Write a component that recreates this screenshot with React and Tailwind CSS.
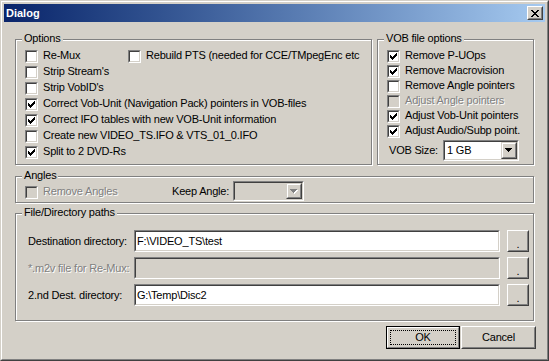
import React from 'react';

const disabledText = "text-[#808080] [text-shadow:1px_1px_0_#fff]";

const CheckMark = () => (
    <svg width="7" height="7" viewBox="0 0 7 7" shapeRendering="crispEdges">
        {[2, 3, 4, 3, 2, 1, 0].map((y, x) => (
            <rect key={x} x={x} y={y} width="1" height="3" fill="#000" />
        ))}
    </svg>
);

const Arrow = ({ disabled }) => (
    <svg width="8" height="5" viewBox="0 0 8 5" shapeRendering="crispEdges">
        {disabled && [0, 1, 2, 3].map((i) => (
            <rect key={'s' + i} x={i + 1} y={i + 1} width={7 - i * 2} height="1" fill="#fff" />
        ))}
        {[0, 1, 2, 3].map((i) => (
            <rect key={i} x={i} y={i} width={7 - i * 2} height="1" fill={disabled ? '#808080' : '#000'} />
        ))}
    </svg>
);

const CloseGlyph = () => (
    <svg width="8" height="7" viewBox="0 0 8 7" shapeRendering="crispEdges">
        <rect x="0" y="0" width="2" height="1" />
        <rect x="6" y="0" width="2" height="1" />
        <rect x="1" y="1" width="2" height="1" />
        <rect x="5" y="1" width="2" height="1" />
        <rect x="2" y="2" width="4" height="1" />
        <rect x="3" y="3" width="2" height="1" />
        <rect x="2" y="4" width="4" height="1" />
        <rect x="1" y="5" width="2" height="1" />
        <rect x="5" y="5" width="2" height="1" />
        <rect x="0" y="6" width="2" height="1" />
        <rect x="6" y="6" width="2" height="1" />
    </svg>
);

const CheckBox = ({ checked, disabled }) => (
    <span className="flex w-[13px] h-[13px] shrink-0 border border-t-[#808080] border-l-[#808080] border-r-white border-b-white">
        <span className={`flex flex-1 items-center justify-center border border-t-[#404040] border-l-[#404040] border-r-[#d4d0c8] border-b-[#d4d0c8] ${disabled ? 'bg-[#d4d0c8]' : 'bg-white'}`}>
            {checked && <CheckMark />}
        </span>
    </span>
);

const Option = ({ label, checked, disabled, className = 'h-[16px]' }) => (
    <div className={`flex items-start ${className}`}>
        <CheckBox checked={checked} disabled={disabled} />
        <span className={`ml-[5px] -mt-[1px] whitespace-nowrap ${disabled ? disabledText : ''}`}>{label}</span>
    </div>
);

const Sunken = ({ className = '', disabled, children }) => (
    <div className={`flex border border-t-[#808080] border-l-[#808080] border-r-white border-b-white ${className}`}>
        <div className={`flex flex-1 items-center min-w-0 border border-t-[#404040] border-l-[#404040] border-r-[#d4d0c8] border-b-[#d4d0c8] ${disabled ? 'bg-[#d4d0c8]' : 'bg-white'}`}>
            {children}
        </div>
    </div>
);

const DropButton = ({ disabled }) => (
    <div className="flex w-[16px] h-full shrink-0 border border-t-[#d4d0c8] border-l-[#d4d0c8] border-r-[#404040] border-b-[#404040]">
        <div className="flex flex-1 items-center justify-center bg-[#d4d0c8] border border-t-white border-l-white border-r-[#808080] border-b-[#808080]">
            <Arrow disabled={disabled} />
        </div>
    </div>
);

const Combo = ({ value, disabled, className }) => (
    <Sunken className={className} disabled={disabled}>
        <span className="flex-1 pl-[2px]">{value}</span>
        <DropButton disabled={disabled} />
    </Sunken>
);

const PushButton = ({ children, className = '' }) => (
    <button className={`flex border border-t-white border-l-white border-r-[#404040] border-b-[#404040] ${className}`}>
        <span className="flex flex-1 items-center justify-center bg-[#d4d0c8] border border-t-[#d4d0c8] border-l-[#d4d0c8] border-r-[#808080] border-b-[#808080]">
            {children}
        </span>
    </button>
);

const Group = ({ title, className = '', children }) => (
    <div className={`relative border border-[#808080] shadow-[inset_1px_1px_0_#fff,1px_1px_0_#fff] ${className}`}>
        <span className="absolute left-[6px] top-[-8px] bg-[#d4d0c8] px-[2px] leading-[13px]">{title}</span>
        {children}
    </div>
);

const PathRow = ({ label, value, disabled }) => (
    <div className="flex items-center h-[22px]">
        <span className={`w-[106px] pl-[12px] whitespace-nowrap box-content ${disabled ? disabledText : ''}`}>{label}</span>
        <Sunken className="w-[366px] h-[22px]" disabled={disabled}>
            <span className="pl-[1px]">{value}</span>
        </Sunken>
        <PushButton className="w-[22px] h-[22px] ml-[7px]">
            <span className="mt-[6px]">.</span>
        </PushButton>
    </div>
);

const App = () => {
    return (
        <div className="w-[549px] h-[361px] bg-[#d4d0c8] border border-t-[#d4d0c8] border-l-[#d4d0c8] border-r-[#404040] border-b-[#404040] font-['Liberation_Sans',Arial,sans-serif] text-[11px] leading-[13px] tracking-[-0.2px] text-black">
            <div className="h-full flex flex-col border border-t-white border-l-white border-r-[#808080] border-b-[#808080] p-[2px]">
                <div className="h-[18px] flex items-center justify-between bg-linear-to-r from-[#0a246a] to-[#a6caf0] pl-[2px] pr-[2px]">
                    <span className="text-white font-bold tracking-normal">Dialog</span>
                    <PushButton className="w-[16px] h-[14px]">
                        <CloseGlyph />
                    </PushButton>
                </div>

                <div className="flex flex-col flex-1 px-[11px] pt-[17px]">
                    <div className="flex gap-[5px] h-[126px]">
                        <Group title="Options" className="w-[357px] pt-[10px] pl-[9px]">
                            <div className="flex">
                                <div className="w-[103px]">
                                    <Option label="Re-Mux" />
                                </div>
                                <Option label="Rebuild PTS (needed for CCE/TMpegEnc etc" />
                            </div>
                            <Option label="Strip Stream's" />
                            <Option label="Strip VobID's" />
                            <Option label="Correct Vob-Unit (Navigation Pack) pointers in VOB-files" checked />
                            <Option label="Correct IFO tables with new VOB-Unit information" checked />
                            <Option label="Create new VIDEO_TS.IFO & VTS_01_0.IFO" />
                            <Option label="Split to 2 DVD-Rs" checked />
                        </Group>

                        <Group title="VOB file options" className="flex-1 pt-[10px] pl-[9px]">
                            <Option label="Remove P-UOps" checked className="h-[15px]" />
                            <Option label="Remove Macrovision" checked className="h-[15px]" />
                            <Option label="Remove Angle pointers" className="h-[15px]" />
                            <Option label="Adjust Angle pointers" disabled className="h-[15px]" />
                            <Option label="Adjust Vob-Unit pointers" checked className="h-[15px]" />
                            <Option label="Adjust Audio/Subp point." checked className="h-[15px]" />
                            <div className="flex items-center h-[21px]">
                                <span className="w-[56px] pl-[2px]">VOB Size:</span>
                                <Combo value="1 GB" className="w-[76px] h-[21px]" />
                            </div>
                        </Group>
                    </div>

                    <Group title="Angles" className="mt-[11px] h-[27px] pl-[9px]">
                        <div className="flex items-start">
                            <div className="w-[147px] mt-[9px]">
                                <Option label="Remove Angles" disabled />
                            </div>
                            <span className="w-[61px] mt-[8px]">Keep Angle:</span>
                            <Combo value="" disabled className="w-[71px] h-[20px] mt-[4px]" />
                        </div>
                    </Group>

                    <Group title="File/Directory paths" className="mt-[10px] h-[108px] pt-[16px] flex flex-col gap-[5px]">
                        <PathRow label="Destination directory:" value="F:\VIDEO_TS\test" />
                        <PathRow label="*.m2v file for Re-Mux:" value="" disabled />
                        <PathRow label="2.nd Dest. directory:" value="G:\Temp\Disc2" />
                    </Group>

                    <div className="flex justify-end mt-[5px] -mr-[2px]">
                        <button className="flex w-[74px] h-[23px] border border-black">
                            <span className="flex flex-1 border border-t-white border-l-white border-r-[#808080] border-b-[#808080]">
                                <span className="flex flex-1 items-center justify-center m-[2px] border border-dotted border-black">
                                    OK
                                </span>
                            </span>
                        </button>
                        <PushButton className="w-[75px] h-[23px] ml-[1px]">Cancel</PushButton>
                    </div>
                </div>
            </div>
        </div>
    );
};

export default App;
